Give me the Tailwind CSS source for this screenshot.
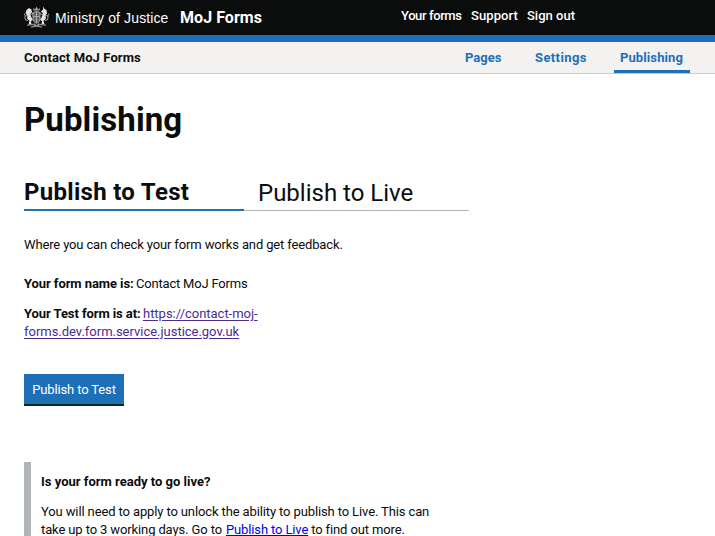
<!DOCTYPE html>
<html lang="en">
<head>
<meta charset="utf-8">
<title>Publishing - MoJ Forms</title>
<script src="https://cdn.jsdelivr.net/npm/@tailwindcss/browser@4"></script>
</head>
<body class="bg-white text-[#0b0c0c] font-['Roboto','Noto_Sans',sans-serif] text-[13px] leading-[17.5px] h-[536px] overflow-hidden">
<header class="h-[42px] bg-[#0b0c0c] border-b-[7px] border-[#1d70b8] text-white flex items-start pl-6 whitespace-nowrap">
  <svg class="w-[25px] h-[22px] mt-[6px] shrink-0" viewBox="0 0 50 44" fill="none" stroke="#d4d4d4" stroke-linecap="round">
    <path d="M19 9l-1-5 4 3 3-6 3 6 4-3-1 5z" fill="#aaa" stroke="none"/>
    <path d="M18 13q7-5 14 0v13q0 6-7 9-7-3-7-9z" fill="#666" stroke="#999" stroke-width="2"/>
    <path d="M25 12v21M19 21h12" stroke="#bbb" stroke-width="1.5"/>
    <path d="M5 8l5-4 5 3 1 6-4 3 3 7 3 5-4 2 1 7H9l2-7-5-5 1-6-4-4z" fill="#e4e4e4" stroke="none"/>
    <path d="M7 29q-6 0-5-6 1-4-1-7M9 17l-5 3M13 17l5-2" stroke-width="1.6"/>
    <path d="M45 8l-4-2-2-5-1 6-4 4 4 4-3 8-3 5 4 2-1 7h6l-2-7 5-5-1-6 3-4z" fill="#e4e4e4" stroke="none"/>
    <path d="M43 29q6 0 5-6-1-4 1-7M41 17l5 3M37 17l-5-2" stroke-width="1.6"/>
    <path d="M7 38q9 0 13-2 5 6 10 0 4 2 13 2M15 42q10-4 20 0" stroke="#999" stroke-width="2.5"/>
  </svg>
  <span class="ml-[6px] mt-[8px] w-[125px] font-['Liberation_Sans',sans-serif] text-[14px] leading-5 tracking-[0.12px]">Ministry of Justice</span>
  <span class="mt-[8px] w-[221px] text-[16px] leading-5 font-bold tracking-[0.05px]">MoJ Forms</span>
  <nav class="mt-[7px] flex font-medium">
    <a class="w-[70px] tracking-[-0.4px]">Your forms</a>
    <a class="w-[56px] tracking-[0.1px]">Support</a>
    <a>Sign out</a>
  </nav>
</header>
<div class="h-8 bg-[#f3f2f1] border-b border-[#c8cacb] flex font-bold pl-6 pr-[25px] whitespace-nowrap">
  <span class="mt-[7px] tracking-[0.1px]">Contact MoJ Forms</span>
  <nav class="ml-auto flex h-8 text-[#1d70b8]">
    <a class="pt-[7px] w-[70px]">Pages</a>
    <a class="pt-[7px] w-[79px] tracking-[0.4px]">Settings</a>
    <a class="pt-[7px] w-[76px] pl-[6px] h-[31px] border-b-[3px] border-[#1d70b8] tracking-[0.1px]">Publishing</a>
  </nav>
</div>
<main class="pl-6 whitespace-nowrap">
  <h1 class="mt-[26px] text-[33px] leading-10 font-bold tracking-[0.1px]">Publishing</h1>
  <div class="mt-[34px] flex h-[37px]">
    <h2 class="w-[220px] border-b-2 border-[#1d70b8] text-[24px] leading-9 font-bold tracking-[0.3px]">Publish to Test</h2>
    <h2 class="w-[225px] pl-[14px] border-b border-[#b1b4b6] text-[24px] leading-[38px]">Publish to Live</h2>
  </div>
  <p class="mt-[25px] tracking-[-0.14px]">Where you can check your form works and get feedback.</p>
  <p class="mt-[21px] tracking-[-0.2px]"><b class="inline-block w-[112px] tracking-[-0.08px]">Your form name is:</b>Contact MoJ Forms</p>
  <p class="mt-[13px] tracking-[-0.02px]"><b class="inline-block w-[119px] tracking-[-0.08px]">Your Test form is at:</b><a class="text-[#4c2c92] underline underline-offset-2"><span>https://contact-moj-</span><br>forms.dev.form.service.justice.gov.uk</a></p>
  <button class="block mt-[34px] w-[100px] h-8 pt-[2px] bg-[#1d70b8] border-b-2 border-[#002d18] text-white tracking-[-0.13px]">Publish to Test</button>
  <section class="mt-[56px] h-[100px] border-l-[7px] border-[#b1b4b6] pl-[10px] pt-[11px]">
    <h3 class="font-bold">Is your form ready to go live?</h3>
    <p class="mt-[12.5px] tracking-[-0.12px]">You will need to apply to unlock the ability to publish to Live. This can<br><span class="inline-block w-[185px]">take up to 3 working days. Go to</span><a class="text-[#0000ee] tracking-[-0.13px] underline underline-offset-1">Publish to Live</a><span class="ml-[3px]">to find out more.</span></p>
  </section>
</main>
</body>
</html>
